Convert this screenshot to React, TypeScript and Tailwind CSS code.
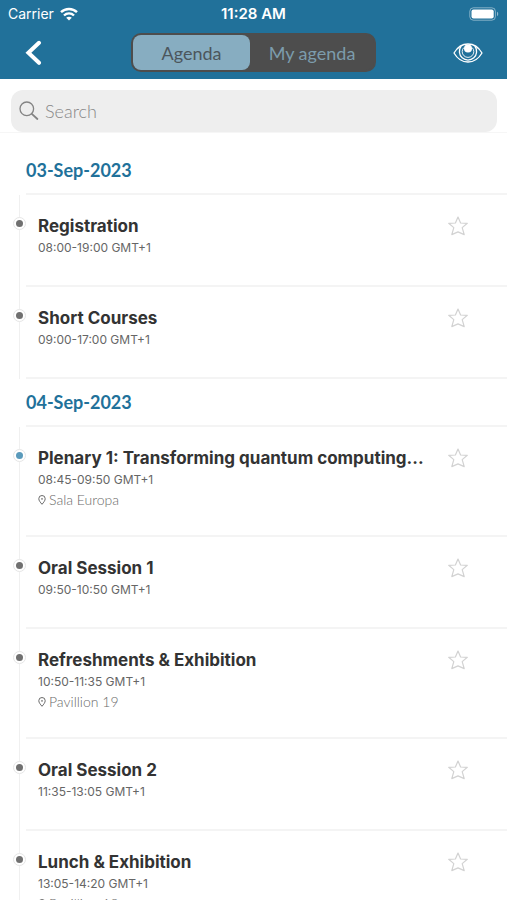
import { useState } from 'react';

type Session = {
    title: string;
    time: string;
    place?: string;
    plenary?: boolean;
};

type Day = {
    date: string;
    sessions: Session[];
};

const days: Day[] = [
    {
        date: '03-Sep-2023',
        sessions: [
            { title: 'Registration', time: '08:00-19:00 GMT+1' },
            { title: 'Short Courses', time: '09:00-17:00 GMT+1' },
        ],
    },
    {
        date: '04-Sep-2023',
        sessions: [
            {
                title: 'Plenary 1: Transforming quantum computing...',
                time: '08:45-09:50 GMT+1',
                place: 'Sala Europa',
                plenary: true,
            },
            { title: 'Oral Session 1', time: '09:50-10:50 GMT+1' },
            { title: 'Refreshments & Exhibition', time: '10:50-11:35 GMT+1', place: 'Pavillion 19' },
            { title: 'Oral Session 2', time: '11:35-13:05 GMT+1' },
            { title: 'Lunch & Exhibition', time: '13:05-14:20 GMT+1', place: 'Pavillion 19' },
        ],
    },
];

function WifiIcon() {
    return (
        <svg width="18" height="14" viewBox="0 0 18 14" fill="none" stroke="currentColor" strokeWidth="2.4" aria-hidden="true">
            <path d="M1 5.2C5.4.9 12.6.9 17 5.2" />
            <path d="M4 8.5c2.8-2.8 7.2-2.8 10 0" />
            <path d="M9 13.6 6.2 10.8c1.5-1.5 4.1-1.5 5.6 0Z" fill="currentColor" stroke="none" />
        </svg>
    );
}

function BatteryIcon() {
    return (
        <svg width="30" height="14" viewBox="0 0 30 14" aria-hidden="true">
            <rect x="0.8" y="0.8" width="25.6" height="12.4" rx="3.6" fill="none" stroke="#fff" strokeOpacity="0.45" />
            <rect x="2.5" y="2.5" width="22.2" height="9" rx="2" fill="#fff" />
            <path d="M28 4.8c1.6.6 1.6 3.8 0 4.4Z" fill="#fff" fillOpacity="0.5" />
        </svg>
    );
}

function EyeIcon() {
    return (
        <svg width="30" height="20" viewBox="0 0 30 20" fill="none" stroke="currentColor" strokeWidth="1.3" aria-hidden="true">
            <path d="M1 10C8-2 22-2 29 10 22 22 8 22 1 10Z" strokeLinejoin="round" />
            <path d="M8.2 3.2a8.6 8.6 0 1 0 13.6 0" />
            <path d="M10.8 4.6a5.8 5.8 0 1 0 8.4 0" strokeWidth="0.9" />
            <circle cx="15" cy="5.4" r="4" fill="currentColor" stroke="none" />
        </svg>
    );
}

function SearchIcon() {
    return (
        <svg width="20" height="20" viewBox="0 0 20 20" fill="none" stroke="#848484" strokeWidth="1.3" strokeLinecap="round" aria-hidden="true">
            <circle cx="7.8" cy="7.8" r="6.8" />
            <path d="m12.8 12.8 5.6 5.2" strokeWidth="1.8" />
        </svg>
    );
}

function StarIcon() {
    return (
        <svg width="20" height="20" viewBox="0 0 20 20" fill="none" stroke="currentColor" strokeWidth="1.2" strokeLinejoin="round" aria-hidden="true">
            <path d="m10 1 2.6 6 6.7.3-5.1 4.3 2 7L10 15.9 3.8 18.6l2-7L.7 7.3 7.4 7Z" />
        </svg>
    );
}

function PinIcon() {
    return (
        <svg width="8" height="10" viewBox="0 0 8 10" fill="none" stroke="currentColor" aria-hidden="true">
            <path d="M4 9.3C2.4 7.4.8 5.6.8 3.7a3.2 3.2 0 0 1 6.4 0C7.2 5.6 5.6 7.4 4 9.3Z" />
            <circle cx="4" cy="3.9" r="0.8" fill="currentColor" stroke="none" />
        </svg>
    );
}

function SessionRow({ session }: { session: Session }) {
    return (
        <li className="flex">
            {/* Timeline rail */}
            <div className="relative w-[26px] shrink-0">
                <span className="absolute inset-y-0 left-[19px] w-px bg-[#f0f0f0]" />
                <span className="absolute left-[13px] top-[22px] flex size-[13px] items-center justify-center rounded-full border border-[#e6e6e6] bg-white">
                    <span className={session.plenary ? 'size-[7px] rounded-full bg-[#5a9abb]' : 'size-[7px] rounded-full bg-[#707070]'} />
                </span>
            </div>
            <div className="flex min-h-[92px] min-w-0 flex-1 items-start border-b-2 border-[#f4f4f4] pb-[25px] pl-3 pr-[39px] pt-[19px]">
                <div className="min-w-0 flex-1">
                    <h3 className="truncate text-[17px] leading-6 font-bold text-[#333]">{session.title}</h3>
                    <p className="text-xs leading-5 text-[#666]">{session.time}</p>
                    {session.place && (
                        <p className="flex items-center gap-[3px] font-[Lato,sans-serif] text-sm leading-5 font-light text-[#6a6a6a]">
                            <PinIcon />
                            {session.place}
                        </p>
                    )}
                </div>
                <button type="button" aria-label={`Add ${session.title} to my agenda`} className="mt-0.5 ml-1 shrink-0 text-[#d2d2d2]">
                    <StarIcon />
                </button>
            </div>
        </li>
    );
}

export default function App() {
    const [tab, setTab] = useState<'all' | 'mine'>('all');
    const active = 'rounded-lg bg-[#87adc1] text-[#4c565c]';
    const inactive = 'rounded-lg text-[#7c9cac]';

    return (
        <div className="flex h-screen w-full flex-col overflow-hidden bg-white font-[Inter,sans-serif]">
            <header className="shrink-0 bg-[#21719a] pb-[7px] text-white">
                {/* Status bar */}
                <div className="grid h-[33px] grid-cols-[1fr_auto_1fr] items-center px-2 pb-[5px] text-sm">
                    <div className="flex items-center gap-1.5">
                        <span>Carrier</span>
                        <WifiIcon />
                    </div>
                    <span className="text-[15px] font-semibold">11:28 AM</span>
                    <div className="flex justify-end">
                        <BatteryIcon />
                    </div>
                </div>
                <nav className="grid grid-cols-[1fr_auto_1fr] items-center px-6">
                    <button type="button" aria-label="Back" className="justify-self-start">
                        <svg width="18" height="26" viewBox="0 0 18 26" fill="none" stroke="currentColor" strokeWidth="4" strokeLinecap="round" aria-hidden="true">
                            <path d="M15 2.8 4.4 12.8 15 22.8" />
                        </svg>
                    </button>
                    <div className="grid h-[39px] grid-cols-[117px_124px] rounded-[10px] border-2 border-[#4d4d4d] bg-[#4d4d4d] font-[Lato,sans-serif] text-lg">
                        <button type="button" onClick={() => setTab('all')} aria-pressed={tab === 'all'} className={tab === 'all' ? active : inactive}>
                            Agenda
                        </button>
                        <button type="button" onClick={() => setTab('mine')} aria-pressed={tab === 'mine'} className={tab === 'mine' ? active : inactive}>
                            My agenda
                        </button>
                    </div>
                    <button type="button" aria-label="Show sessions" className="justify-self-end">
                        <EyeIcon />
                    </button>
                </nav>
            </header>

            <div className="shrink-0 border-b border-[#f6f6f6] pt-[11px] pr-2.5 pl-[11px]">
                <label className="flex h-[42px] items-center gap-1.5 rounded-xl bg-[#eee] pr-3 pl-2">
                    <SearchIcon />
                    <input
                        type="text"
                        aria-label="Search"
                        placeholder="Search"
                        className="min-w-0 flex-1 bg-transparent font-[Lato,sans-serif] text-lg font-light text-[#444] outline-none placeholder:text-[#888]"
                    />
                </label>
            </div>

            <main className="min-h-0 flex-1 overflow-y-auto pt-[14px] [scrollbar-width:none]">
                {days.map((day) => (
                    <section key={day.date}>
                        <h2 className="ml-[26px] h-12 border-b-2 border-[#f4f4f4] font-[Lato,sans-serif] text-lg leading-[46px] font-bold text-[#21719a]">
                            {day.date}
                        </h2>
                        <ul>
                            {day.sessions.map((session) => (
                                <SessionRow key={session.title} session={session} />
                            ))}
                        </ul>
                    </section>
                ))}
            </main>
        </div>
    );
}
